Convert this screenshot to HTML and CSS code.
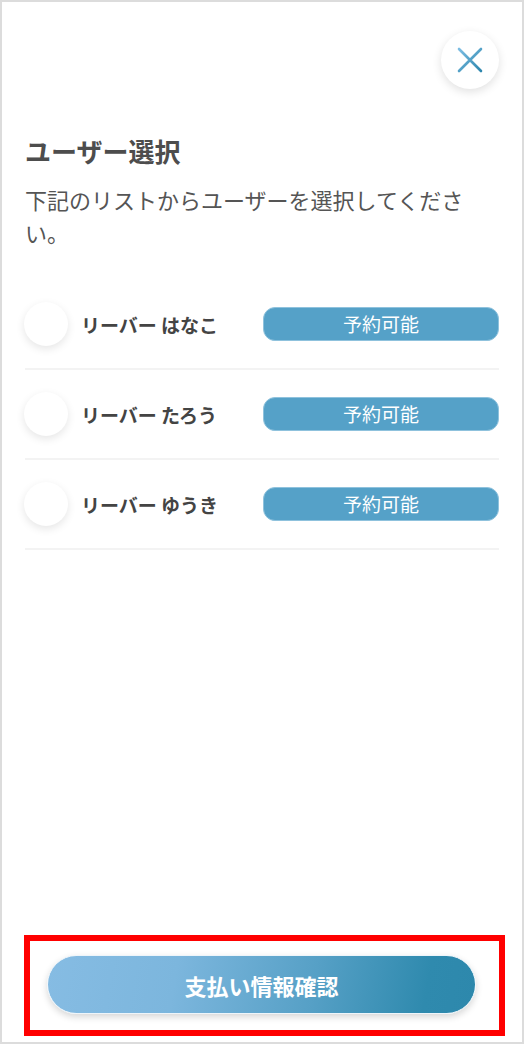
FILE: index.html
```html
<!doctype html>
<html lang="ja">
<head>
    <meta charset="UTF-8">
    <title>ユーザー選択</title>
    <link rel="stylesheet" href="styles.css">
</head>
<body>
<div class="frame">
    <div class="header">
        <button class="close-button" aria-label="閉じる">
            <svg width="26" height="26" viewBox="0 0 26 26">
                <defs>
                    <linearGradient id="xGrad" x1="0" y1="0" x2="1" y2="1">
                        <stop offset="0" stop-color="#7cbde3"/>
                        <stop offset="1" stop-color="#2d86ad"/>
                    </linearGradient>
                </defs>
                <path d="M2 2 L24 24 M24 2 L2 24" stroke="url(#xGrad)" stroke-width="2.6" stroke-linecap="round"/>
            </svg>
        </button>
    </div>

    <h1 class="title">ユーザー選択</h1>
    <p class="lead">下記のリストからユーザーを選択してください。</p>

    <ul class="user-list">
        <li class="user-row">
            <span class="avatar"></span>
            <span class="user-name">リーバー はなこ</span>
            <span class="status">予約可能</span>
        </li>
        <li class="user-row">
            <span class="avatar"></span>
            <span class="user-name">リーバー たろう</span>
            <span class="status">予約可能</span>
        </li>
        <li class="user-row">
            <span class="avatar"></span>
            <span class="user-name">リーバー ゆうき</span>
            <span class="status">予約可能</span>
        </li>
    </ul>

    <div class="footer">
        <button class="submit-button">支払い情報確認</button>
    </div>
</div>
</body>
</html>
```

FILE: styles.css
```css
html,
body {
    margin: 0;
    padding: 0;
    background: #fff;
}

body {
    font-family: "Noto Sans CJK JP", "Noto Sans", sans-serif;
    color: #4a4a4a;
}

.frame {
    box-sizing: border-box;
    width: 524px;
    height: 1044px;
    border: 2px solid #dcdcdc;
    padding: 0 23px;
    display: flex;
    flex-direction: column;
}

.header {
    display: flex;
    justify-content: flex-end;
    padding-top: 29px;
}

.close-button {
    width: 58px;
    height: 58px;
    border-radius: 50%;
    border: none;
    background: #fff;
    box-shadow: 0 3px 10px rgba(0, 0, 0, 0.12);
    display: flex;
    align-items: center;
    justify-content: center;
    padding: 0;
    outline: none;
}

.title {
    margin: 44px 0 0;
    font-size: 26px;
    line-height: 36px;
    font-weight: 700;
    color: #4d4d4d;
}

.lead {
    margin: 14px 0 0;
    font-size: 22px;
    line-height: 33px;
    color: #555;
}

.user-list {
    list-style: none;
    margin: 31px 0 0;
    padding: 0;
}

.user-row {
    box-sizing: border-box;
    height: 90px;
    display: flex;
    align-items: center;
    border-bottom: 2px solid #f3f3f3;
}

.avatar {
    width: 44px;
    height: 44px;
    border-radius: 50%;
    background: #fff;
    box-shadow: 0 3px 8px rgba(0, 0, 0, 0.1);
    flex-shrink: 0;
    margin-left: -1px;
}

.user-name {
    margin-left: 13px;
    font-size: 19px;
    font-weight: 700;
    color: #444;
    flex: 1;
}

.status {
    width: 236px;
    height: 34px;
    box-sizing: border-box;
    border-radius: 12px;
    border: 1px solid #8fc2dd;
    background: #55a1c8;
    color: #fff;
    font-size: 19px;
    line-height: 32px;
    text-align: center;
}

.footer {
    margin-top: auto;
    margin-left: -1px;
    margin-bottom: 6px;
    box-sizing: border-box;
    width: 481px;
    border: 6px solid #ff0000;
    padding: 14px 0 16px 17px;
}

.submit-button {
    display: block;
    width: 429px;
    height: 59px;
    border-radius: 30px;
    border: 1px solid #eef5fa;
    background: linear-gradient(100deg, #86bce3 0%, #7cb6dd 30%, #56a0c6 62%, #2f8aae 88%, #2d88ac 100%);
    box-shadow: 0 3px 7px rgba(0, 0, 0, 0.16);
    color: #fff;
    font-family: inherit;
    font-size: 22px;
    font-weight: 700;
    padding: 0;
    outline: none;
}
```
